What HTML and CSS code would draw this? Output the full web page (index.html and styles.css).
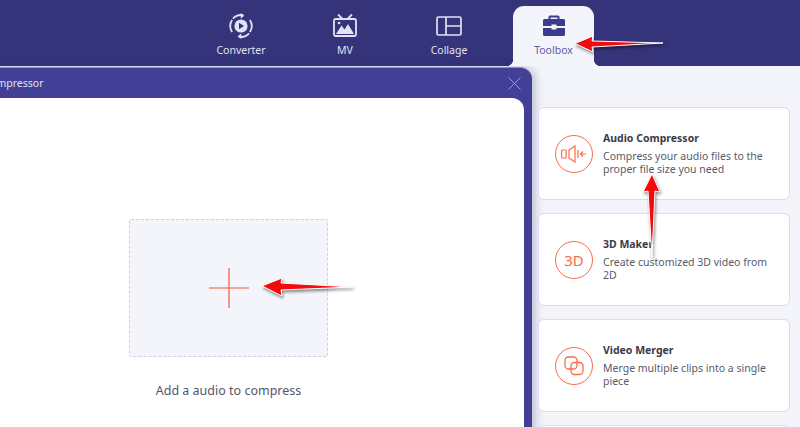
FILE: index.html
```html
<!DOCTYPE html>
<html lang="en">
<head>
    <meta charset="UTF-8">
    <meta name="viewport" content="width=device-width, initial-scale=1.0">
    <title>Audio Compressor</title>
    <link rel="stylesheet" href="styles.css">
</head>
<body>
    <header class="topbar">
        <nav class="tabs">
            <a class="tab">
                <svg class="tab-icon" width="26" height="26" viewBox="0 0 26 26" fill="none" stroke="currentColor" stroke-width="1.8">
                    <path d="M5 5.6A11 11 0 0 1 15.5 2.3"/>
                    <path d="M12.6 -.4 16.2 2.4 12.8 5" fill="currentColor" stroke="none" transform="translate(0 .4)"/>
                    <path d="M21 20.4A11 11 0 0 1 10.5 23.7"/>
                    <path d="M13.4 26.4 9.8 23.6 13.2 21" fill="currentColor" stroke="none" transform="translate(0 -.4)"/>
                    <path d="M4.1 7A11 11 0 0 0 4.1 19M21.9 7A11 11 0 0 1 21.9 19"/>
                    <circle cx="13" cy="13" r="6.6" fill="currentColor" stroke="none"/>
                    <path d="M11 9.8 16 13 11 16.2Z" fill="#35337a" stroke="none"/>
                </svg>
                <span>Converter</span>
            </a>
            <a class="tab">
                <svg class="tab-icon" width="26" height="26" viewBox="0 0 26 26" fill="none" stroke="currentColor" stroke-width="1.8">
                    <rect x="2" y="6" width="22" height="17" rx="1.5"/>
                    <path d="M6 1.5 10.5 6M20 1.5 15.5 6"/>
                    <path d="M4 21 9.5 12.5 12.5 16.5 16 11 22 21Z" fill="currentColor" stroke="none"/>
                    <circle cx="7" cy="10" r="1.3" fill="currentColor" stroke="none"/>
                </svg>
                <span>MV</span>
            </a>
            <a class="tab">
                <svg class="tab-icon" width="26" height="26" viewBox="0 0 26 26" fill="none" stroke="currentColor" stroke-width="1.7">
                    <rect x="1" y="4" width="24" height="18" rx="1.5"/>
                    <path d="M10 4V22M10 13H25"/>
                </svg>
                <span>Collage</span>
            </a>
            <a class="tab tab-active">
                <svg class="tab-icon" width="26" height="26" viewBox="0 0 26 26" fill="currentColor">
                    <path d="M9 2.5h8a1.5 1.5 0 0 1 1.5 1.5v2.5h-2V4.500h-7v2h-2V4A1.500 1.500 0 0 1 9 2.500Z"/>
                    <path d="M3.500 6h19A1.500 1.500 0 0 1 24 7.500V13H15.500v-1.500h-5V13H2V7.500A1.500 1.500 0 0 1 3.500 6Z"/>
                    <path d="M2 15h8.500v1.500h5V15H24v6.500a1.500 1.500 0 0 1-1.500 1.500h-19A1.500 1.500 0 0 1 2 21.500Z"/>
                </svg>
                <span>Toolbox</span>
            </a>
        </nav>
    </header>

    <main class="content">
        <section class="dialog">
            <div class="dialog-head">
                <span class="dialog-title">Audio Compressor</span>
                <svg class="dialog-close" width="13" height="13" viewBox="0 0 13 13" stroke="currentColor" stroke-width="1">
                    <path d="M.5 .5 12.500 12.500M12.500 .5 .5 12.500"/>
                </svg>
            </div>
            <div class="dialog-body">
                <div class="dropzone">
                    <svg width="40" height="40" viewBox="0 0 40 40" stroke="#f4593b" stroke-width="1.200">
                        <path d="M20 0V40M0 20H40"/>
                    </svg>
                </div>
                <p class="drop-label">Add a audio to compress</p>
            </div>
        </section>

        <aside class="tools">
            <div class="card">
                <div class="card-icon">
                    <svg width="26" height="18" viewBox="0 0 26 18" fill="none" stroke="currentColor" stroke-width="1.200">
                        <rect x=".6" y="5" width="4.500" height="8" rx=".8"/>
                        <path d="M8 5 14 1V17L8 13Z"/>
                        <path d="M17 5V13M25 9H19.500M22 6.500 19.500 9 22 11.500"/>
                    </svg>
                </div>
                <div class="card-text">
                    <h3>Audio Compressor</h3>
                    <p>Compress your audio files to the proper file size you need</p>
                </div>
            </div>
            <div class="card">
                <div class="card-icon card-icon-text">3D</div>
                <div class="card-text">
                    <h3>3D Maker</h3>
                    <p>Create customized 3D video from 2D</p>
                </div>
            </div>
            <div class="card">
                <div class="card-icon">
                    <svg width="20" height="20" viewBox="0 0 20 20" fill="none" stroke="currentColor" stroke-width="1.300">
                        <rect x="1" y="1" width="12" height="12" rx="3.500"/>
                        <rect x="7" y="6.500" width="12" height="12" rx="3.500"/>
                    </svg>
                </div>
                <div class="card-text">
                    <h3>Video Merger</h3>
                    <p>Merge multiple clips into a single piece</p>
                </div>
            </div>
            <div class="card"></div>
        </aside>
    </main>

    <!-- red arrows drawn on top of the screenshot -->
    <svg class="arrows" width="800" height="427" viewBox="0 0 800 427">
        <path d="M575 43.500 593 36 592 41 663 43 592 47 593 52Z"/>
        <path d="M652 174 660 192 655 191 652 257 648 191 643 192Z"/>
        <path d="M262 286 282 278 281 283 353 287 281 290 282 296Z"/>
    </svg>
</body>
</html>
```

FILE: styles.css
```css
body{
    margin: 0;
    width: 800px;
    height: 427px;
    overflow: hidden;
    position: relative;
    background-color: #f3f5fb;
    font-family: "Noto Sans", "Liberation Sans", sans-serif;
}

.topbar{
    height: 66px;
    background-color: #35337a;
}

.tabs{
    display: flex;
    margin-left: 189px;
}

.tab{
    width: 104px;
    height: 60px;
    margin-top: 6px;
    padding-top: 7px;
    box-sizing: border-box;
    display: flex;
    flex-direction: column;
    align-items: center;
    gap: 4px;
    color: #e2e2f4;
    font-size: 10.5px;
    line-height: 14px;
}

.tab-active{
    position: relative;
    width: 81px;
    margin-left: 12px;
    background-color: #f3f5fb;
    border-radius: 11px 11px 0 0;
    color: #3c3a8c;
}

.tab-active span{
    color: #5e58a8;
}

.tab-active::before,
.tab-active::after{
    content: "";
    position: absolute;
    bottom: 0;
    width: 7px;
    height: 7px;
}

.tab-active::before{
    left: -7px;
    background: radial-gradient(circle at 0 0, transparent 7px, #f3f5fb 7.5px);
}

.tab-active::after{
    right: -7px;
    background: radial-gradient(circle at 100% 0, transparent 7px, #f3f5fb 7.5px);
}

.content{
    display: flex;
    align-items: flex-start;
}

.dialog{
    flex: none;
    width: 599px;
    height: 400px;
    margin: 1px 0 0 -67px;
    background-color: #413f96;
    border-top: 1px solid #8e8dbf;
    border-radius: 0 12px 0 0;
    box-shadow: 3px 0 10px rgba(40, 40, 90, .28);
}

.dialog-head{
    height: 30px;
    padding: 0 11px 0 19px;
    display: flex;
    align-items: center;
    justify-content: space-between;
    color: #e2e2f4;
    font-size: 10.5px;
}

.dialog-close{
    color: #9d9cd0;
}

.dialog-body{
    height: 370px;
    margin-right: 8px;
    padding-top: 121px;
    box-sizing: border-box;
    background-color: #fff;
    border-radius: 0 12px 0 0;
    display: flex;
    flex-direction: column;
    align-items: center;
}

.dropzone{
    width: 199px;
    height: 138px;
    box-sizing: border-box;
    display: flex;
    align-items: center;
    justify-content: center;
    background-color: #f3f5fb;
    border: 1.500px dashed #cfcfe6;
    border-radius: 2px;
}

.drop-label{
    margin: 25px 0 0;
    color: #555566;
    font-size: 12.500px;
    line-height: 18px;
}

.tools{
    flex: none;
    width: 252px;
    margin: 41px 0 0 6px;
    display: flex;
    flex-direction: column;
    gap: 13px;
}

.card{
    flex: none;
    height: 93px;
    padding-left: 16px;
    padding-right: 12px;
    box-sizing: border-box;
    display: flex;
    align-items: center;
    gap: 10px;
    background-color: #fff;
    border: 1px solid #d9d9fa;
    border-radius: 6px;
}

.card-icon{
    flex: none;
    width: 38px;
    height: 38px;
    box-sizing: border-box;
    display: flex;
    align-items: center;
    justify-content: center;
    color: #fb6a4b;
    border: 1.500px solid #fb6a4b;
    border-radius: 50%;
}

.card-icon-text{
    font-size: 15px;
}

.card-text h3{
    margin: 0 0 5px;
    color: #3a3a48;
    font-size: 10.500px;
    font-weight: 700;
    line-height: 14px;
}

.card-text p{
    margin: 0;
    color: #5a5a68;
    font-size: 10.500px;
    line-height: 13px;
}

.arrows{
    position: absolute;
    left: 0;
    top: 0;
    pointer-events: none;
}

.arrows path{
    fill: #f40a0a;
    stroke: #fff;
    stroke-width: 1;
    filter: drop-shadow(1px 2px 1.500px rgba(0, 0, 0, .45));
}
```
